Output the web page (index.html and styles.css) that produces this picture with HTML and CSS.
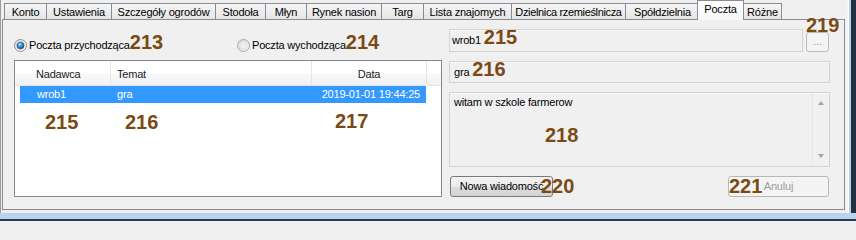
FILE: index.html
```html
<!DOCTYPE html>
<html lang="pl">
<head>
<meta charset="utf-8">
<title>Poczta</title>
<link rel="stylesheet" href="styles.css">
</head>
<body>
<div class="window">
  <div class="main">
    <div class="content">
      <div class="tabs">
        <div class="tab t-konto">Konto</div>
        <div class="tab t-ust">Ustawienia</div>
        <div class="tab t-szcz">Szczegóły ogrodów</div>
        <div class="tab t-stod">Stodoła</div>
        <div class="tab t-mlyn">Młyn</div>
        <div class="tab t-rynek">Rynek nasion</div>
        <div class="tab t-targ">Targ</div>
        <div class="tab t-lista">Lista znajomych</div>
        <div class="tab t-dziel">Dzielnica rzemieślnicza</div>
        <div class="tab t-spol">Spółdzielnia</div>
        <div class="tab active t-poczta">Poczta</div>
        <div class="tab t-rozne">Różne</div>
      </div>
      <div class="page">
        <div class="left">
          <div class="radios">
            <div class="radio"><svg class="dot" width="13" height="13" viewBox="0 0 13 13"><defs><linearGradient id="rg1" x1="0" y1="0" x2="1" y2="1"><stop offset="0" stop-color="#dcdcdc"/><stop offset="1" stop-color="#fbfbfb"/></linearGradient><radialGradient id="rb1" cx="40%" cy="35%" r="65%"><stop offset="0" stop-color="#c4e6fc"/><stop offset="0.5" stop-color="#3d8ad0"/><stop offset="1" stop-color="#174f8c"/></radialGradient></defs><circle cx="6.5" cy="6.5" r="6" fill="url(#rg1)" stroke="#8e8f8f"/><circle cx="6.5" cy="6.5" r="3.6" fill="url(#rb1)" stroke="#2a5b8e" stroke-width="0.6"/></svg>Poczta przychodząca<span class="num">213</span></div>
            <div class="radio"><svg class="dot" width="13" height="13" viewBox="0 0 13 13"><defs><linearGradient id="rg2" x1="0" y1="0" x2="1" y2="1"><stop offset="0" stop-color="#d8d8d8"/><stop offset="1" stop-color="#fafafa"/></linearGradient></defs><circle cx="6.5" cy="6.5" r="6" fill="url(#rg2)" stroke="#a8a8a8"/><circle cx="6.5" cy="6.5" r="3.8" fill="#eeeeee" stroke="#d2d2d2" stroke-width="0.6"/></svg>Poczta wychodząca<span class="num">214</span></div>
          </div>
          <div class="list">
            <div class="lhead">
              <div class="hc c1">Nadawca</div>
              <div class="hc c2">Temat</div>
              <div class="hc c3">Data</div>
              <div class="hc c4"></div>
            </div>
            <div class="lrow sel">
              <div class="rc c1">wrob1</div>
              <div class="rc c2">gra</div>
              <div class="rc c3">2019-01-01 19:44:25</div>
            </div>
            <span class="num tag n215">215</span>
            <span class="num tag n216">216</span>
            <span class="num tag n217">217</span>
          </div>
        </div>
        <div class="right">
          <div class="row1">
            <div class="tb tb1">wrob1 <span class="num">215</span></div>
            <div class="dotsbtn">...<span class="num tag n219">219</span></div>
          </div>
          <div class="tb tb2">gra <span class="num">216</span></div>
          <div class="ta">
            <div class="ta-text">witam w szkole farmerow<span class="num tag n218">218</span></div>
            <div class="sb">
              <div class="sb-btn"><span class="arr up"></span></div>
              <div class="sb-btn"><span class="arr down"></span></div>
            </div>
          </div>
          <div class="btns">
            <div class="btn">Nowa wiadomość<span class="num tag n220">220</span></div>
            <div class="btn disabled">Anuluj<span class="num tag n221">221</span></div>
          </div>
        </div>
      </div>
    </div>
    <div class="rframe"></div>
  </div>
  <div class="bframe"></div>
</div>
</body>
</html>
```
FILE: styles.css
```css
* { box-sizing: border-box; margin: 0; padding: 0; }
html, body { width: 856px; height: 221px; overflow: hidden; }
body {
  font-family: "Liberation Sans", Arial, sans-serif;
  font-size: 11px;
  letter-spacing: -0.2px;
  color: #000;
  background: #f0f0f0;
}
.window { display: flex; flex-direction: column; width: 856px; height: 221px; }
.main { display: flex; height: 213px; }
.content {
  width: 847px;
  border-left: 1px solid #9b9b9b;
  padding-left: 1px;
  display: flex;
  flex-direction: column;
}
.rframe {
  flex: 1;
  background: linear-gradient(to right, #f4f4f4 0 1px, #ffffff 1px 2px, #b3d0ee 2px 4px, #22313f 4px);
}
.bframe {
  height: 8px;
  background: linear-gradient(#b8d3ee 0 6px, #2a3a4a 6px);
}

/* tabs */
.tabs {
  display: flex;
  align-items: flex-end;
  height: 19px;
  padding-left: 2px;
  position: relative;
  z-index: 1;
}
.tab {
  height: 16px;
  padding: 1px 0 0;
  line-height: 14px;
  text-align: center;
  white-space: nowrap;
  border: 1px solid #898c95;
  border-bottom: none;
  margin-right: -1px;
  background: linear-gradient(#f6f6f6, #e5e5e5);
}
.t-konto { width: 43px; }
.t-ust { width: 66px; }
.t-szcz { width: 105px; }
.t-stod { width: 51px; }
.t-mlyn { width: 42px; }
.t-rynek { width: 76px; }
.t-targ { width: 43px; }
.t-lista { width: 89px; }
.t-dziel { width: 115px; letter-spacing: -0.35px; }
.t-spol { width: 75px; }
.t-poczta { width: 47px; }
.t-rozne { width: 39px; }
.tab.active {
  height: 20px;
  margin: 0 -1px -1px -2px;
  background: linear-gradient(#ffffff, #f7f7f7);
  position: relative;
  z-index: 2;
}

/* page */
.page {
  width: 843px;
  height: 191px;
  border: 1px solid #898c95;
  background: #f0f0f0;
  padding: 9px 14px 0 11px;
  display: grid;
  grid-template-columns: 428px 381px;
  column-gap: 7px;
  align-items: start;
}

.radios {
  height: 31px;
  display: grid;
  grid-template-columns: 223px auto;
  align-items: center;
}
.radio { line-height: 14px; white-space: nowrap; }
.dot { display: inline-block; vertical-align: -3px; margin-right: 2px; }

.num {
  font-size: 20px;
  font-weight: bold;
  color: #7b4a14;
  letter-spacing: 0;
  line-height: 0;
}
.tag { position: absolute; line-height: 1; }

/* list */
.list {
  position: relative;
  height: 137px;
  border: 1px solid #828790;
  background: #fff;
}
.lhead {
  display: grid;
  grid-template-columns: 96px 201px 115px 1fr;
  height: 25px;
  border-bottom: 1px solid #e3e6ea;
  background: linear-gradient(#ffffff 0 55%, #f7f8fa 55%, #f1f2f4);
  color: #1a1a1a;
}
.hc { padding-top: 3px; line-height: 21px; border-right: 1px solid #e3e5e8; white-space: nowrap; }
.hc.c1 { padding-left: 21px; }
.hc.c2 { padding-left: 6px; }
.hc.c3 { text-align: center; }
.hc.c4 { border-right: none; }

.lrow {
  display: grid;
  grid-template-columns: 90px 201px 115px;
  margin-left: 5px;
  width: 406px;
  height: 17px;
  line-height: 17px;
}
.lrow.sel { background: #3399ff; color: #fff; }
.rc { white-space: nowrap; }
.rc.c1 { padding-left: 17px; }
.rc.c2 { padding-left: 7px; }
.rc.c3 { text-align: right; padding-right: 6px; }

.n215 { left: 30px; top: 51px; }
.n216 { left: 110px; top: 51px; }
.n217 { left: 320px; top: 50px; }

/* right side */
.row1 { display: flex; align-items: flex-end; gap: 3px; }
.tb {
  border: 1px solid #d3d3d3;
  box-shadow: inset 0 1px 0 #fafafa;
  background: #f0f0f0;
  white-space: nowrap;
}
.tb1 { flex: 1; height: 23px; line-height: 21px; padding-left: 2px; }
.tb2 { margin-top: 9px; height: 22px; line-height: 20px; padding-left: 4px; }
.dotsbtn {
  position: relative;
  width: 23px;
  height: 20px;
  margin-right: 1px;
  border: 1px solid #bcbcbc;
  border-radius: 3px;
  background: #f4f4f4;
  color: #9a9a9a;
  text-align: center;
  line-height: 16px;
  letter-spacing: 0;
}
.n219 { left: -1px; top: -18px; }

.ta {
  margin-top: 9px;
  height: 75px;
  border: 1px solid #d3d3d3;
  box-shadow: inset 0 1px 0 #fafafa;
  background: #f0f0f0;
  display: flex;
}
.ta-text {
  position: relative;
  flex: 1;
  padding: 2px 4px;
  line-height: 14px;
  white-space: nowrap;
}
.n218 { left: 95px; top: 32px; }
.sb {
  width: 17px;
  border-left: 1px solid #e6e6e6;
  display: flex;
  flex-direction: column;
  justify-content: space-between;
}
.sb-btn { height: 20px; display: flex; align-items: center; justify-content: center; }
.arr { width: 0; height: 0; border-left: 3.5px solid transparent; border-right: 3.5px solid transparent; }
.arr.up { border-bottom: 4px solid #a3a3a3; }
.arr.down { border-top: 4px solid #a3a3a3; }

.btns { margin-top: 9px; display: flex; justify-content: space-between; height: 21px; }
.btn {
  position: relative;
  width: 103px;
  height: 21px;
  margin-left: 1px;
  border: 1px solid #7a7a7a;
  border-radius: 3px;
  background: linear-gradient(#f2f2f2 0%, #ebebeb 50%, #dedede 51%, #d3d3d3 100%);
  text-align: center;
  line-height: 19px;
  white-space: nowrap;
}
.btn.disabled {
  width: 101px;
  margin-left: 0;
  margin-right: 1px;
  border-color: #b5b8ba;
  background: #f4f4f4;
  color: #9d9d9d;
}
.n220 { left: 90px; top: -1px; }
.n221 { left: 0; top: -1px; }
```
